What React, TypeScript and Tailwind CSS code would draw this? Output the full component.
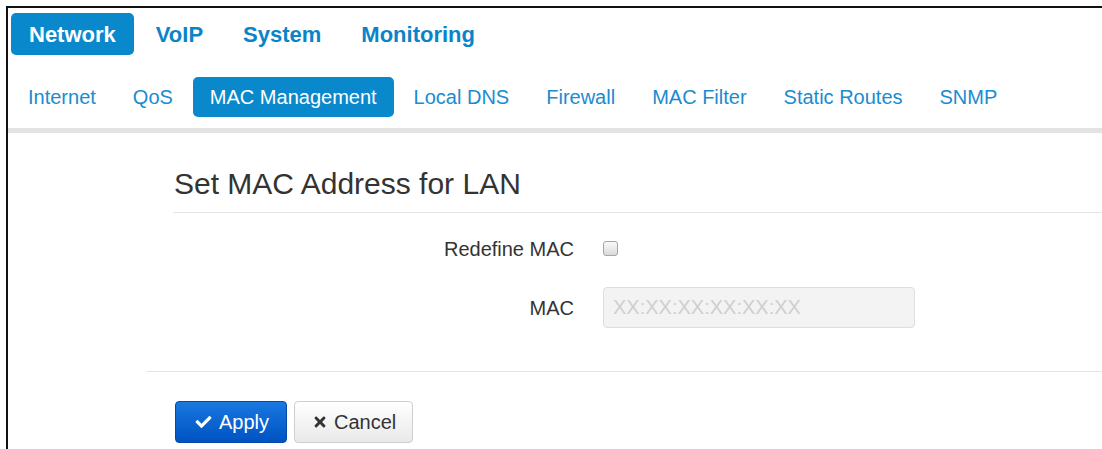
import { FaCheck, FaTimes } from 'react-icons/fa'

const mainTabs = ['Network', 'VoIP', 'System', 'Monitoring']
const subTabs = ['Internet', 'QoS', 'MAC Management', 'Local DNS', 'Firewall', 'MAC Filter', 'Static Routes', 'SNMP']

// PAGE: MAC management settings
const App = () => {
    const activeMain = 'Network'
    const activeSub = 'MAC Management'

    return (
        <div className="min-h-screen bg-white pl-[6px] pt-[6px] font-['Liberation_Sans',Arial,sans-serif]">
            <div className="h-[443px] border-l-2 border-t-2 border-[#111]">
                {/* Top menu */}
                <nav className="flex gap-[4px] pl-[3px] pt-[5px]">
                    {mainTabs.map((tab) => (
                        <a
                            key={tab}
                            className={`flex h-[42px] items-center rounded-[5px] px-[18px] text-[22px] font-bold ${
                                tab === activeMain ? 'bg-[#0a88cc] text-white' : 'text-[#0a84c8]'
                            }`}
                        >
                            {tab}
                        </a>
                    ))}
                </nav>

                {/* Sub menu */}
                <nav className="mt-[22px] flex gap-[3px] pl-[3px]">
                    {subTabs.map((tab) => (
                        <a
                            key={tab}
                            className={`flex h-[40px] items-center rounded-[5px] px-[17px] text-[20px] ${
                                tab === activeSub ? 'bg-[#0a88cc] text-white' : 'text-[#1a8cd0]'
                            }`}
                        >
                            {tab}
                        </a>
                    ))}
                </nav>
                <div className="mt-[11px] h-[5px] bg-[#e3e3e3]" />

                {/* Form */}
                <div className="ml-[165px] mt-[34px] border-b border-[#e5e5e5] pb-[12px]">
                    <h2 className="pl-[1px] text-[30px] leading-[33px] text-[#333]">Set MAC Address for LAN</h2>
                </div>

                <div className="mt-[15px] flex h-[41px] items-center">
                    <label htmlFor="redefine_mac" className="w-[566px] text-right text-[20px] text-[#333]">
                        Redefine MAC
                    </label>
                    <input
                        id="redefine_mac"
                        type="checkbox"
                        className="ml-[29px] h-[15px] w-[15px] appearance-none rounded-[3px] border border-[#a5a5a5] bg-gradient-to-b from-[#fafafa] to-[#dadada]"
                    />
                </div>

                <div className="mt-[18px] flex h-[41px] items-center">
                    <label htmlFor="mac" className="w-[566px] text-right text-[20px] text-[#333]">
                        MAC
                    </label>
                    <input
                        id="mac"
                        type="text"
                        disabled
                        placeholder="XX:XX:XX:XX:XX:XX"
                        className="ml-[29px] h-[41px] w-[312px] rounded-[4px] border border-[#dedede] bg-[#f3f3f3] pl-[9px] text-[20px] placeholder:text-[#cfcfcf]"
                    />
                </div>

                {/* Actions */}
                <div className="ml-[138px] mt-[43px] border-t border-[#e5e5e5] pt-[29px]">
                    <div className="ml-[29px] flex gap-[7px]">
                        <button
                            type="button"
                            className="flex h-[42px] w-[112px] items-center gap-[7px] rounded-[4px] border border-[#0448a8] bg-gradient-to-b from-[#1a78e0] to-[#0052c2] pl-[19px] text-[20px] text-white"
                        >
                            <FaCheck className="h-[16px] w-[17px]" />
                            Apply
                        </button>
                        <button
                            type="button"
                            className="flex h-[42px] w-[119px] items-center gap-[7px] rounded-[4px] border border-[#cfcfcf] bg-gradient-to-b from-white to-[#e9e9e9] pl-[18px] text-[20px] text-[#333]"
                        >
                            <FaTimes className="h-[16px] w-[14px]" />
                            Cancel
                        </button>
                    </div>
                </div>
            </div>
        </div>
    )
}

export default App
